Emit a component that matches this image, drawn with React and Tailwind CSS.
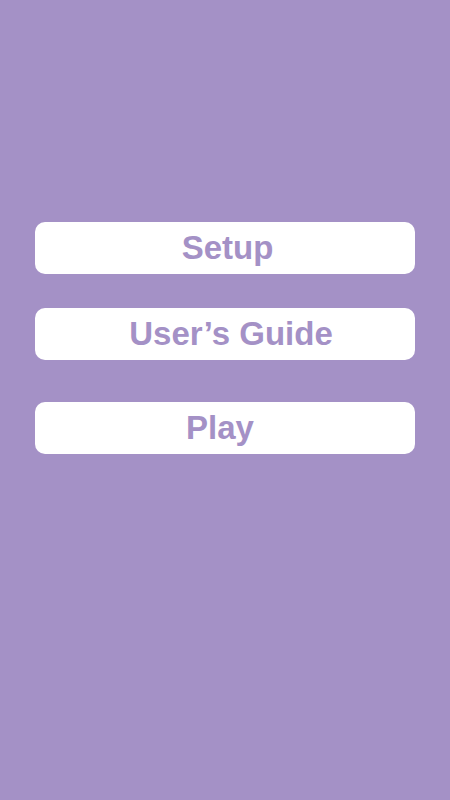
export default function App() {
  const items = [
    { label: 'Setup', cls: 'mt-0 pl-[5px]' },
    { label: 'User’s Guide', cls: 'mt-[34px] pl-[12px]' },
    { label: 'Play', cls: 'mt-[42px] pr-[10px]' },
  ];

  return (
    <div className="w-[450px] h-[800px] bg-[#a491c6] flex flex-col px-[35px] pt-[222px]">
      {items.map((item) => (
        <button
          key={item.label}
          className={`${item.cls} h-[52px] w-full bg-white rounded-[10px] text-[#a491c6] text-[33px] font-bold font-['Liberation_Sans',Arial,sans-serif] flex items-center justify-center`}
        >
          {item.label}
        </button>
      ))}
    </div>
  );
}
